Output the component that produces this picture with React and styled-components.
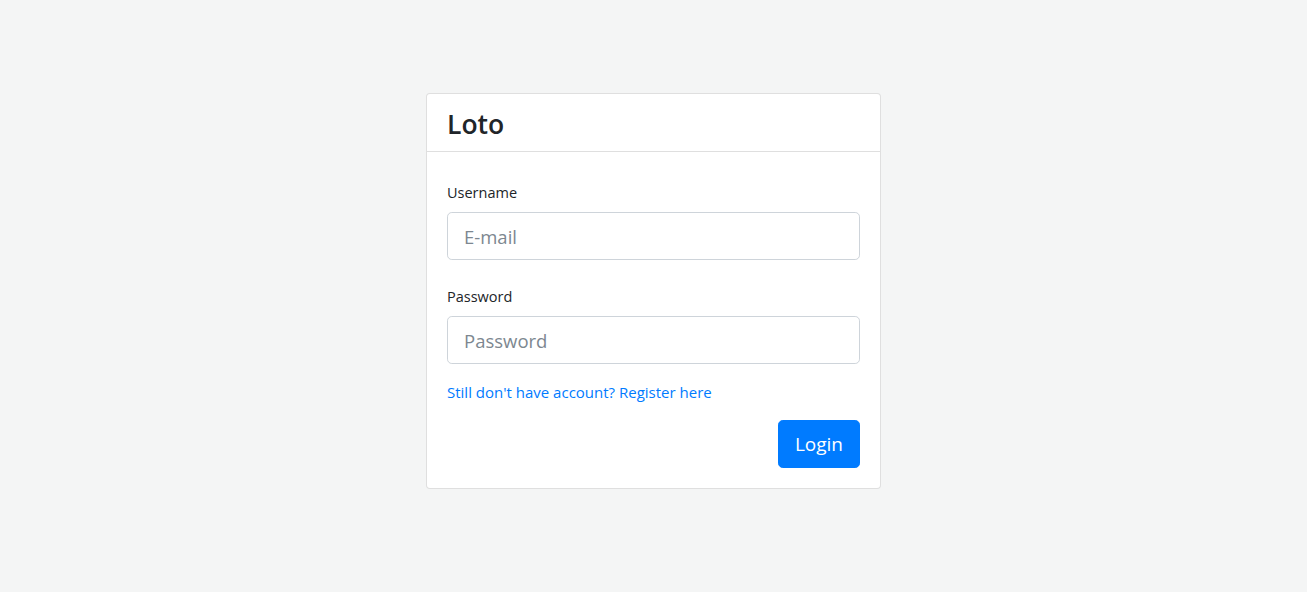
import React from "react";
import styled, { createGlobalStyle } from "styled-components";

const Global = createGlobalStyle`
  html, body { margin: 0; padding: 0; }
  body {
    background: #f4f5f5;
    font-family: "Open Sans", "Noto Sans", sans-serif;
    color: #212529;
  }
  * { box-sizing: border-box; }
`;

const Page = styled.div`
  display: flex;
  justify-content: center;
  align-items: flex-start;
  padding-top: 93px;
  min-height: 592px;
`;

const Card = styled.div`
  width: 455px;
  background: #fff;
  border: 1px solid rgba(0, 0, 0, 0.125);
  border-radius: 4px;
  display: flex;
  flex-direction: column;
`;

const CardHeader = styled.div`
  padding: 14px 20px 10px;
  border-bottom: 1px solid rgba(0, 0, 0, 0.125);
`;

const Title = styled.h3`
  margin: 0;
  font-size: 26.5px;
  font-weight: 600;
  line-height: 33px;
  color: #212529;
`;

const CardBody = styled.form`
  padding: 29px 20px 20px;
  display: flex;
  flex-direction: column;
`;

const Group = styled.div`
  display: flex;
  flex-direction: column;
  margin-bottom: ${(p) => p.$mb}px;
`;

const Label = styled.label`
  font-size: 14.5px;
  line-height: 24px;
  margin-bottom: 7px;
  color: #212529;
`;

const Input = styled.input`
  height: 48px;
  width: 100%;
  padding: 8px 16px;
  font-family: inherit;
  font-size: 18.5px;
  color: #495057;
  border: 1px solid #ced4da;
  border-radius: 4.8px;
  background: #fff;
  outline: none;
  &::placeholder { color: #7d8790; }
`;

const RegisterLink = styled.a`
  font-size: 15px;
  line-height: 24px;
  color: #007bff;
  text-decoration: none;
  align-self: flex-start;
`;

const Actions = styled.div`
  display: flex;
  justify-content: flex-end;
  margin-top: 16px;
`;

const Button = styled.button`
  height: 48px;
  padding: 0 16px;
  font-family: inherit;
  font-size: 19px;
  color: #fff;
  background: #007bff;
  border: 1px solid #007bff;
  border-radius: 4.8px;
  cursor: pointer;
`;

export default function App() {
  return (
    <>
      <Global />
      <Page>
        <Card>
          <CardHeader>
            <Title>Loto</Title>
          </CardHeader>
          <CardBody onSubmit={(e) => e.preventDefault()}>
            <Group $mb={25}>
              <Label>Username</Label>
              <Input type="text" placeholder="E-mail" />
            </Group>
            <Group $mb={16}>
              <Label>Password</Label>
              <Input type="password" placeholder="Password" />
            </Group>
            <RegisterLink href="#">Still don't have account? Register here</RegisterLink>
            <Actions>
              <Button type="submit">Login</Button>
            </Actions>
          </CardBody>
        </Card>
      </Page>
    </>
  );
}
